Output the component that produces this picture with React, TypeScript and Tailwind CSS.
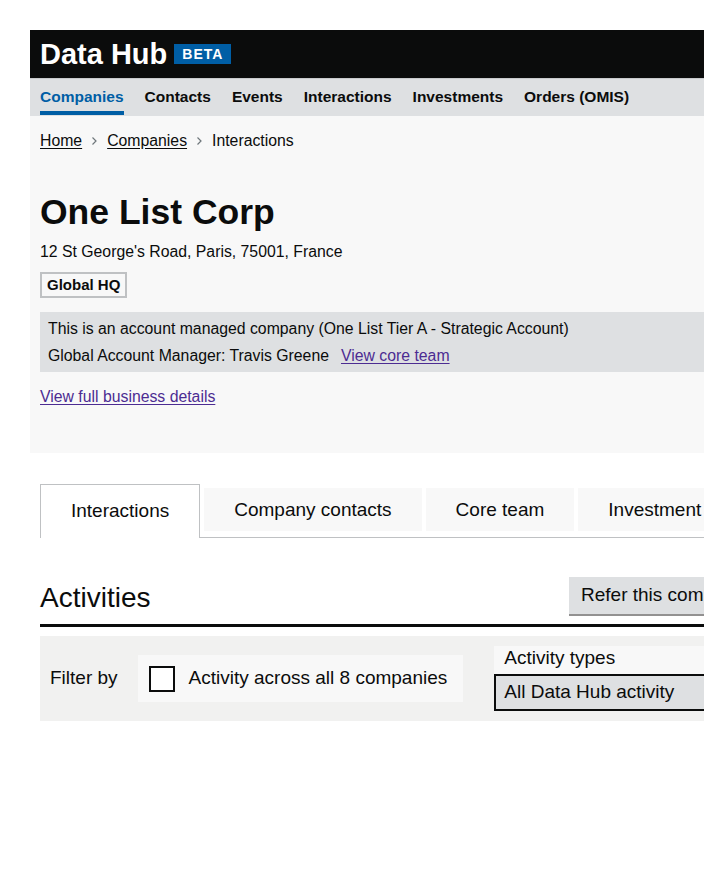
import React from 'react';

const navItems = ['Companies', 'Contacts', 'Events', 'Interactions', 'Investments', 'Orders (OMIS)'];
const tabs = ['Interactions', 'Company contacts', 'Core team', 'Investment'];

const Chevron: React.FC = () => (
  <svg width="7" height="10" viewBox="0 0 7 10" className="mx-[9px]">
    <path d="M1.5 1.5 L5 5 L1.5 8.5" fill="none" stroke="#6f777b" strokeWidth="1.2" />
  </svg>
);

export default function App() {
  return (
    <div
      className="w-full min-h-[892px] overflow-hidden bg-white pt-[30px] pl-[30px] text-[#0b0c0c]"
      style={{ fontFamily: '"Liberation Sans", Arial, sans-serif' }}
    >
      <div className="w-[1000px]">
        {/* header */}
        <div className="h-[48px] bg-[#0b0c0c] flex items-center pl-[10px]">
          <span className="text-white font-bold text-[29px] leading-none">Data Hub</span>
          <span className="ml-[7px] h-[20px] px-[8px] bg-[#005ea5] text-white font-bold text-[14px] tracking-[1px] flex items-center">
            BETA
          </span>
        </div>

        {/* nav */}
        <div className="h-[38px] bg-[#dee0e2] border-t border-[#c8cacc] flex pl-[10px] gap-[21px]">
          {navItems.map((item, i) => (
            <div
              key={item}
              className={`flex flex-col justify-between pt-[8px] pb-[1px] font-bold text-[15.5px] leading-[20px] ${
                i === 0 ? 'text-[#005ea5]' : 'text-[#0b0c0c]'
              }`}
            >
              <span>{item}</span>
              <span className={`h-[4px] w-full ${i === 0 ? 'bg-[#005ea5]' : ''}`}></span>
            </div>
          ))}
        </div>

        {/* hero */}
        <div className="bg-[#f8f8f8] pl-[10px] pt-[15px] pb-[46px] text-[15.8px]">
          <div className="flex items-center leading-[20px]">
            <a className="underline underline-offset-2">Home</a>
            <Chevron />
            <a className="underline underline-offset-2">Companies</a>
            <Chevron />
            <span>Interactions</span>
          </div>

          <h1 className="mt-[41px] text-[35.5px] leading-[40px] font-bold">One List Corp</h1>
          <div className="mt-[10px] leading-[20px]">12 St George's Road, Paris, 75001, France</div>
          <div className="mt-[10px] inline-flex h-[26px] items-center border-2 border-[#bfc1c3] px-[5px] text-[15px] font-bold">
            Global HQ
          </div>

          <div className="mt-[14px] bg-[#dee0e2] py-[3px] pl-[8px] leading-[27px]">
            <div>This is an account managed company (One List Tier A - Strategic Account)</div>
            <div>
              Global Account Manager: Travis Greene
              <a className="ml-[12px] text-[#4c2c92] underline underline-offset-2">View core team</a>
            </div>
          </div>

          <div className="mt-[15px] leading-[20px]">
            <a className="text-[#4c2c92] underline underline-offset-2">View full business details</a>
          </div>
        </div>

        {/* tabs + content */}
        <div className="pl-[10px]">
          <div className="mt-[31px] flex items-start gap-[4px] border-b border-[#bfc1c3]">
            {tabs.map((t, i) =>
              i === 0 ? (
                <div
                  key={t}
                  className="-mb-px flex h-[54px] items-center border border-b-0 border-[#bfc1c3] bg-white px-[30px] text-[19px]"
                >
                  {t}
                </div>
              ) : (
                <div key={t} className="mt-[4px] flex h-[43px] items-center bg-[#f8f8f8] px-[30px] pt-[2px] text-[19px]">
                  {t}
                </div>
              )
            )}
          </div>

          <div className="mt-[39px] flex items-center border-b-[3px] border-[#0b0c0c] pb-[8px]">
            <h2 className="w-[529px] pt-[2px] text-[28px] leading-[32px]">Activities</h2>
            <div className="flex h-[39px] items-center border-b-2 border-[#929191] bg-[#dee0e2] px-[12px] text-[19px]">
              Refer this company
            </div>
          </div>

          <div className="mt-[9px] flex items-center bg-[#f1f1f0] py-[10px] pl-[10px]">
            <span className="text-[19px]">Filter by</span>
            <div className="ml-[20px] flex h-[47px] items-center bg-[#f8f8f8] pl-[11px] pr-[16px]">
              <span className="h-[26px] w-[26px] border-2 border-[#0b0c0c] bg-white"></span>
              <span className="ml-[14px] text-[19px]">Activity across all 8 companies</span>
            </div>
            <div className="ml-[31px] flex w-[400px] flex-col">
              <div className="h-[28px] bg-[#f8f8f8] pl-[10px] text-[19px] leading-[24px]">Activity types</div>
              <div className="flex h-[37px] items-center border-2 border-[#0b0c0c] bg-[#dee0e2] pl-[8px] text-[19px]">
                All Data Hub activity
              </div>
            </div>
          </div>
        </div>
      </div>
    </div>
  );
}
